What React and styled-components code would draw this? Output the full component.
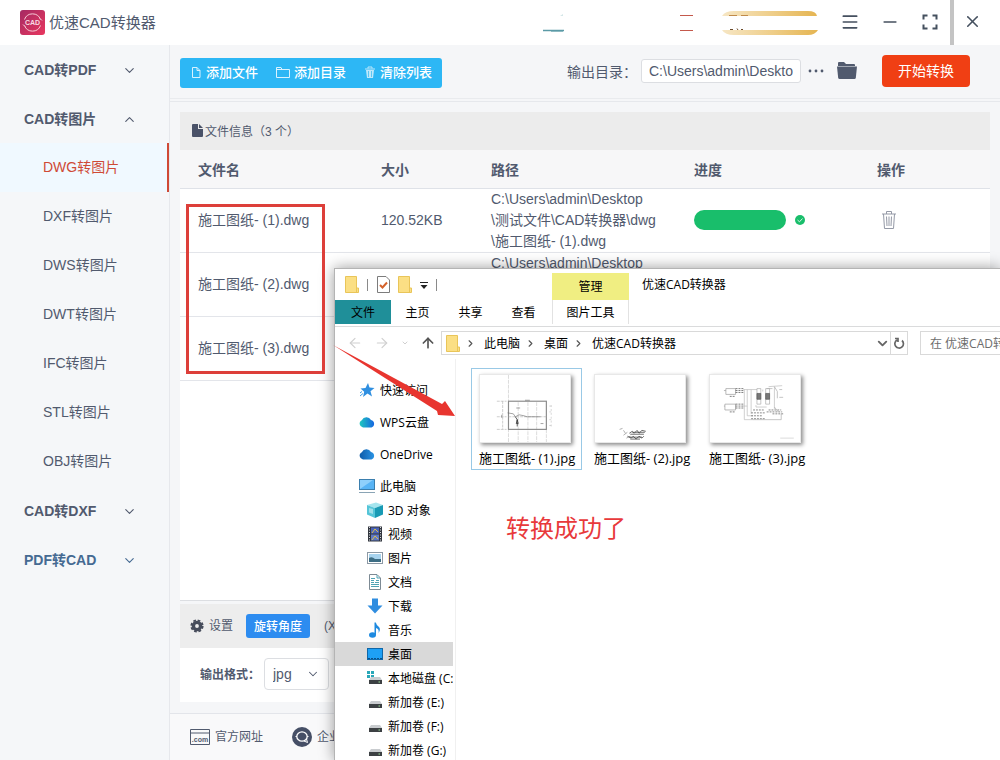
import React, { useState } from "react";
import styled, { createGlobalStyle, css } from "styled-components";
import {
  ArrowLeft,
  ArrowRight,
  ArrowUp,
  ChevronDown,
  ChevronRight,
  ChevronUp,
  Menu,
  Minus,
  X,
} from "lucide-react";

const appFont = `"Liberation Sans", "Noto Sans CJK SC", sans-serif`;
const shellFont = `"Open Sans", "Noto Sans CJK SC", sans-serif`;

const GlobalStyle = createGlobalStyle`
  * {
    box-sizing: border-box;
  }
  body {
    margin: 0;
    background: #f5f6f8;
    color: #515a6e;
    font-family: ${appFont};
    font-size: 14px;
  }
  button, input, select {
    margin: 0;
    font-family: inherit;
    color: inherit;
  }
  svg {
    display: block;
    flex: none;
  }
`;

const Page = styled.div`
  position: relative;
  display: flex;
  flex-direction: column;
  min-height: 100vh;
  overflow: hidden;
`;

/* ---------- title bar ---------- */

const TitleBar = styled.header`
  display: flex;
  align-items: center;
  height: 45px;
  padding-left: 20px;
  background: #fff;
`;

const AppTitle = styled.h1`
  flex: 1;
  margin: 0 0 0 4px;
  font-size: 15px;
  font-weight: 400;
  line-height: 24px;
`;

const TitleActions = styled.div`
  display: flex;
  align-items: center;
  height: 100%;
  padding-right: 10px;
`;

const WindowButton = styled.button`
  display: flex;
  align-items: center;
  justify-content: center;
  width: ${(p) => (p.$last ? 36 : 40)}px;
  height: 44px;
  padding: 0 0 2px;
  border: 0;
  background: none;
  color: #45505f;
`;

const TitleDivider = styled.span`
  width: 4px;
  height: 100%;
  background: #c4c4c4;
`;

/* ---------- body ---------- */

const Body = styled.div`
  display: flex;
  flex: 1;
`;

const Sidebar = styled.nav`
  flex: none;
  width: 170px;
  border-right: 1px solid #e6e8ec;
  background: #f5f7f9;
`;

const GroupButton = styled.button`
  display: flex;
  align-items: center;
  justify-content: space-between;
  width: 100%;
  height: 49px;
  padding: 0 32px 2px 24px;
  border: 0;
  background: none;
  font-size: 14px;
  font-weight: 700;
  color: ${(p) => (p.$accent ? "#456a92" : "#515a6e")};
  svg {
    margin-top: 3px;
  }
`;

const SubLink = styled.a`
  display: flex;
  align-items: center;
  height: 49px;
  padding: 0 0 3px 43px;
  color: #515a6e;
  text-decoration: none;
  ${(p) =>
    p.$active &&
    css`
      border-right: 2px solid #cf4a36;
      background: #f0f9ff;
      color: #cf4a36;
    `}
`;

const Main = styled.main`
  display: flex;
  flex: 1;
  flex-direction: column;
  min-width: 0;
`;

const Toolbar = styled.div`
  display: flex;
  align-items: center;
  height: 54px;
  padding: 0 30px 2px 10px;
  border-bottom: 1px solid #e9ebee;
`;

const ToolbarEdge = styled.div`
  height: 3px;
  border-bottom: 1px solid #e6e8ec;
`;

const ActionGroup = styled.div`
  display: flex;
  align-items: center;
  height: 30px;
  margin-right: auto;
  margin-top: 4px;
  padding: 0 10px 0 11px;
  gap: 18px;
  border-radius: 3px;
  background: #2db7f5;
`;

const ActionButton = styled.button`
  display: flex;
  align-items: center;
  gap: 4px;
  padding: 0;
  border: 0;
  background: none;
  color: #fff;
  font-size: 13px;
  font-weight: 500;
  line-height: 20px;
`;

const PathInput = styled.input`
  width: 160px;
  height: 24px;
  margin-left: 4px;
  padding: 0 7px;
  border: 1px solid #dcdee2;
  border-radius: 3px;
  background: #fff;
  font-size: 14px;
`;

const PlainButton = styled.button`
  display: flex;
  margin-left: ${(p) => p.$gap}px;
  padding: 0;
  border: 0;
  background: none;
`;

const StartButton = styled.button`
  width: 88px;
  height: 32px;
  margin-left: 25px;
  padding: 0 0 2px;
  border: 0;
  border-radius: 4px;
  background: #f03f14;
  color: #fff;
  font-size: 14px;
`;

const Panel = styled.section`
  display: flex;
  flex: 1;
  flex-direction: column;
  margin: 10px 10px 3px;
  border-bottom: 1px solid #dcdee2;
  background: #fff;
`;

const PanelHead = styled.div`
  display: flex;
  align-items: center;
  height: 38px;
  padding: 0 0 2px 12px;
  gap: 2px;
  background: #ececec;
  font-size: 12px;
`;

const FileTable = styled.table`
  width: 100%;
  border-collapse: collapse;
  table-layout: fixed;
  th {
    height: 38px;
    padding: 0 0 0 18px;
    border-bottom: 1px solid #dfe2e8;
    background: #f7f7f8;
    text-align: left;
    font-weight: 700;
  }
  td {
    height: 64px;
    padding: 0 0 0 18px;
    border-bottom: 1px solid #e3e5ea;
    line-height: 21px;
    white-space: nowrap;
  }
`;

const Col = styled.col`
  width: ${(p) => p.$w}px;
`;

const Progress = styled.div`
  display: flex;
  align-items: center;
  gap: 9px;
`;

const ProgressBar = styled.div`
  width: 92px;
  height: 20px;
  border-radius: 10px;
  background: #19be6b;
`;

const Settings = styled.section`
  margin: 0 10px 11px;
  background: #fff;
`;

const SettingsHead = styled.div`
  display: flex;
  align-items: center;
  height: 44px;
  padding-left: 10px;
  background: #ededed;
  font-size: 12px;
`;

const SettingsLabel = styled.span`
  margin: 0 13px 0 5px;
  padding-bottom: 3px;
`;

const RotateButton = styled.button`
  width: 64px;
  height: 24px;
  margin-right: 14px;
  padding: 0 0 2px;
  border: 0;
  border-radius: 3px;
  background: #2d8cf0;
  color: #fff;
  font-size: 12px;
  font-weight: 500;
`;

const FormatRow = styled.div`
  display: flex;
  align-items: center;
  height: 54px;
  padding: 0 0 2px 20px;
  label {
    width: 64px;
    padding-bottom: 2px;
    font-size: 12px;
    font-weight: 700;
  }
`;

const SelectBox = styled.div`
  display: grid;
  align-items: center;
  width: 65px;
  height: 32px;
  border: 1px solid #dcdee2;
  border-radius: 4px;
  select {
    grid-area: 1 / 1;
    height: 30px;
    padding: 0 8px;
    border: 0;
    background: none;
    font-size: 14px;
    appearance: none;
  }
  svg {
    grid-area: 1 / 1;
    justify-self: end;
    margin-right: 8px;
    pointer-events: none;
  }
`;

const Footer = styled.footer`
  display: flex;
  align-items: center;
  height: 47px;
  padding-left: 20px;
  gap: 29px;
  border-top: 1px solid #e3e5ea;
  background: #f9f9fa;
`;

const FooterLink = styled.a`
  display: flex;
  align-items: center;
  gap: 5px;
  color: #515a6e;
  font-size: 12px;
  text-decoration: none;
  span {
    padding-bottom: 3px;
  }
`;

/* ---------- explorer window ---------- */

const Explorer = styled.section`
  position: absolute;
  left: 334px;
  top: 268px;
  right: 0;
  bottom: 0;
  display: flex;
  flex-direction: column;
  overflow: hidden;
  border-top: 1px solid #b4b4b4;
  border-left: 1px solid #b4b4b4;
  background: #fff;
  color: #000;
  font-family: ${shellFont};
  font-size: 12px;
`;

const ExplorerShadow = styled.div`
  position: absolute;
  left: 334px;
  top: 268px;
  right: 0;
  bottom: 0;
  box-shadow: 0 0 14px rgba(0, 0, 0, 0.4);
`;

const Ribbon = styled.div`
  display: flex;
  height: 58px;
  border-bottom: 1px solid #dadbdc;
`;

const RibbonLeft = styled.div`
  width: 217px;
`;

const QuickBar = styled.div`
  display: flex;
  align-items: center;
  height: 31px;
  padding-left: 10px;
  gap: 8px;
`;

const QuickSep = styled.span`
  width: 1px;
  height: 12px;
  background: #8a8a8a;
`;

const TabRow = styled.div`
  display: flex;
`;

const Tab = styled.button`
  width: ${(p) => (p.$file ? 56 : 53)}px;
  height: 24px;
  padding: 0;
  border: 0;
  background: ${(p) => (p.$file ? "#1f8f99" : "none")};
  font-size: 12px;
`;

const ContextTab = styled.div`
  width: 77px;
  padding-top: 4px;
`;

const ContextHead = styled.div`
  height: 27px;
  background: #f0ee82;
  line-height: 27px;
  text-align: center;
`;

const ContextButton = styled.button`
  width: 100%;
  height: 24px;
  padding: 0;
  border: solid #e2e2e2;
  border-width: 0 1px;
  background: none;
  font-size: 12px;
`;

const ExplorerTitle = styled.h2`
  margin: 0 0 0 13px;
  font-size: 12px;
  font-weight: 400;
  line-height: 31px;
`;

const AddressRow = styled.div`
  display: flex;
  align-items: center;
  height: 32px;
  padding-left: 12px;
`;

const NavButtons = styled.div`
  display: flex;
  align-items: center;
  width: 94px;
  gap: 11px;
`;

const NavButton = styled.button`
  display: flex;
  padding: 0;
  border: 0;
  background: none;
  color: ${(p) => (p.$on ? "#555" : "#d0d0d0")};
`;

const AddressBox = styled.div`
  display: flex;
  flex: 1;
  align-items: center;
  height: 24px;
  padding-left: 4px;
  border: 1px solid #d9d9d9;
`;

const Crumb = styled.a`
  display: flex;
  align-items: center;
  gap: 8px;
  margin-left: 5px;
  color: #000;
  text-decoration: none;
`;

const AddressEnd = styled.div`
  display: flex;
  align-items: center;
  height: 100%;
  margin-left: auto;
`;

const RefreshButton = styled.button`
  display: flex;
  align-items: center;
  justify-content: center;
  width: 17px;
  height: 100%;
  padding: 0;
  border: 0;
  border-left: 1px solid #d9d9d9;
  background: none;
`;

const SearchInput = styled.input`
  width: 80px;
  height: 24px;
  margin-left: 12px;
  padding: 0 0 0 9px;
  border: 1px solid #d9d9d9;
  border-right: 0;
  border-radius: 0;
  font-size: 12px;
  &::placeholder {
    color: #6d6d6d;
    opacity: 1;
  }
`;

const ExplorerBody = styled.div`
  display: flex;
  flex: 1;
  min-height: 0;
`;

const Tree = styled.nav`
  flex: none;
  width: 121px;
  padding-top: 19px;
  padding-right: 2px;
  border-right: 1px solid #f0f0f0;
`;

const TreeLink = styled.a`
  display: flex;
  align-items: center;
  height: 24px;
  margin-bottom: ${(p) => (p.$spaced ? 8 : 0)}px;
  padding-left: ${(p) => (p.$child ? 32 : 24)}px;
  gap: 5px;
  overflow: hidden;
  background: ${(p) => (p.$selected ? "#d9d9d9" : "none")};
  color: #000;
  text-decoration: none;
  white-space: nowrap;
`;

const Files = styled.div`
  display: flex;
  align-items: flex-start;
  gap: 4px;
  padding: 9px 0 0 15px;
`;

const FileTile = styled.figure`
  width: 111px;
  height: 102px;
  margin: 0;
  padding: 5px 0 0 7px;
  border: 1px solid ${(p) => (p.$selected ? "#99c9e6" : "transparent")};
  figcaption {
    margin-top: 5px;
    font-size: 13px;
    line-height: 20px;
    white-space: nowrap;
  }
`;

const Thumb = styled.svg`
  width: 92px;
  height: 69px;
  border: 1px solid #e8e8e8;
  background: #fff;
  box-shadow: 2px 2px 4px rgba(0, 0, 0, 0.45);
`;

/* ---------- annotations drawn over the windows ---------- */

const MarkBox = styled.div`
  position: absolute;
  left: 186px;
  top: 204px;
  width: 139px;
  height: 170px;
  border: 3px solid #dd3f3a;
`;

const MarkArrow = styled.svg`
  position: absolute;
  left: 332px;
  top: 344px;
`;

const MarkText = styled.p`
  position: absolute;
  left: 506px;
  top: 510px;
  margin: 0;
  color: #e8393b;
  font-family: ${shellFont};
  font-size: 24px;
  line-height: 36px;
`;

/* ---------- icons ---------- */

const Logo = () => (
  <svg width="25" height="25" viewBox="0 0 25 25">
    <defs>
      <linearGradient id="logo" x1="0" y1="0" x2="1" y2="1">
        <stop offset="0" stopColor="#a52a63" />
        <stop offset="1" stopColor="#e8375f" />
      </linearGradient>
    </defs>
    <rect width="25" height="25" rx="3" fill="url(#logo)" />
    <path
      d="M4.500 9.500A8.500 8.500 0 0 1 20.500 9.500M20.500 15.500A8.500 8.500 0 0 1 4.500 15.500M3 14.500L5 16.500M22 10.500L20 8.500"
      fill="none"
      stroke="#f6cbd6"
    />
    <text
      x="12.500"
      y="15"
      textAnchor="middle"
      fontSize="7"
      fontWeight="700"
      fill="#f9dbe3"
      fontFamily="Liberation Sans"
    >
      CAD
    </text>
  </svg>
);

// half-hidden login / customer service / VIP badges
const HeaderBadges = () => (
  <svg width="287" height="26" viewBox="0 0 287 26">
    <defs>
      <linearGradient id="gold">
        <stop offset="0" stopColor="#f6e6c4" />
        <stop offset="0.5" stopColor="#efcf8c" />
        <stop offset="1" stopColor="#e5b552" />
      </linearGradient>
    </defs>
    <path d="M0 20.500H21" stroke="#5b9aa6" strokeWidth="1.500" />
    <path d="M8 21.500H20" stroke="#8dbac2" />
    <path d="M17 6L20 4V6Z" fill="#d3e6e7" />
    <path d="M137 5.500H150M137 20.500H150" stroke="#c4594c" />
    <path d="M179 6Q182 1 191 1H265Q273 1 274 6Z" fill="url(#gold)" />
    <path d="M179 20H275Q272 25 265 25H191Q182 25 179 20Z" fill="url(#gold)" />
    <path d="M186 5.500H194M198 5.500H205" stroke="#c08a4a" />
    <path d="M187 19.500H190M194 18.500L195 20M198 19.500H200" stroke="#6b4a2a" />
  </svg>
);

const FullscreenIcon = () => (
  <svg width="16" height="16" viewBox="0 0 16 16" fill="none" stroke="#45505f" strokeWidth="2">
    <path d="M1.500 5.500V1.500H5.500M10.500 1.500H14.500V5.500M14.500 10.500V14.500H10.500M5.500 14.500H1.500V10.500" />
  </svg>
);

const FileLineIcon = () => (
  <svg width="11" height="13" viewBox="0 0 11 13" fill="none" stroke="#d9f2ff">
    <path d="M1.500 1.500H6L9 4.500V11.500H1.500ZM6 1.500V4.500H9" />
  </svg>
);

const FolderLineIcon = () => (
  <svg width="14" height="12" viewBox="0 0 14 12" fill="none" stroke="#d9f2ff">
    <path d="M0.500 10.500V0.500H5L6 2.500H13.500V10.500ZM0.500 2.500H6" />
  </svg>
);

const TrashSmallIcon = () => (
  <svg width="12" height="13" viewBox="0 0 12 13">
    <path d="M1 3H11M4 2.500V1H8V2.500" fill="none" stroke="#bfe8fb" />
    <path d="M2 4H10L9 12H3Z" fill="#bfe8fb" />
    <path d="M4.500 5V11M7.500 5V11" stroke="#5cc6f3" />
  </svg>
);

const TrashIcon = () => (
  <svg width="14" height="20" viewBox="0 0 14 20" fill="none" stroke="#9499a6">
    <path d="M0 4H14M4.500 4V1.500H9.500V4M1.500 4L2.500 18.500H11.500L12.500 4M4.500 6.500L5 16M9.500 6.500L9 16M7 6.500V16" />
  </svg>
);

const DocSolidIcon = () => (
  <svg width="11" height="13" viewBox="0 0 11 13" fill="#4a5268">
    <path d="M1 0H6V5H11V12Q11 13 10 13H1Q0 13 0 12V1Q0 0 1 0ZM7 0L11 4H7Z" />
  </svg>
);

const DotsIcon = () => (
  <svg width="16" height="4" viewBox="0 0 16 4" fill="#515a6e">
    <circle cx="2" cy="2" r="1.400" />
    <circle cx="8" cy="2" r="1.400" />
    <circle cx="14" cy="2" r="1.400" />
  </svg>
);

const FolderSolidIcon = () => (
  <svg width="20" height="17" viewBox="0 0 20 17" fill="#515a6e">
    <path d="M1 4V1Q1 0 2 0H7L9 2H17Q18 2 18 3V4Z" />
    <path d="M0 4.500H20L18.800 16Q18.500 17 17.500 17H2.500Q1.500 17 1.200 16Z" />
  </svg>
);

const CheckIcon = () => (
  <svg width="10" height="10" viewBox="0 0 10 10">
    <circle cx="5" cy="5" r="5" fill="#19be6b" />
    <path d="M2.500 5L4.500 6.800L7.500 3.500" fill="none" stroke="#d6f5e4" />
  </svg>
);

const GearIcon = () => (
  <svg width="14" height="14" viewBox="0 0 14 14">
    <circle cx="7" cy="7" r="3.600" fill="none" stroke="#464c5b" strokeWidth="3.400" />
    <circle
      cx="7"
      cy="7"
      r="5.700"
      fill="none"
      stroke="#464c5b"
      strokeWidth="1.800"
      strokeDasharray="2.700 1.780"
    />
  </svg>
);

const SiteIcon = () => (
  <svg width="20" height="16" viewBox="0 0 20 16">
    <path d="M0.500 0.500H19.500V15.500H0.500ZM0.500 4H19.500" fill="none" stroke="#515a6e" />
    <text x="10" y="13" textAnchor="middle" fontSize="7" fontWeight="700" fill="#515a6e">
      .com
    </text>
  </svg>
);

const ServiceIcon = () => (
  <svg width="20" height="20" viewBox="0 0 20 20">
    <circle cx="10" cy="10" r="10" fill="#464f66" />
    <ellipse cx="10" cy="9.500" rx="5.200" ry="4.700" fill="none" stroke="#fff" strokeWidth="1.300" />
    <path d="M3.500 9.500H5M15 9.500H16.500M12 14L15.500 15.500L14.500 12" fill="none" stroke="#fff" />
  </svg>
);

const FolderIcon = () => (
  <svg width="14" height="17" viewBox="0 0 14 17">
    <path d="M0.500 0.500H11.500V12H13.500V16.500H0.500Z" fill="#fbdf84" stroke="#e9c559" />
    <path d="M11.500 10V16" stroke="#e9c559" />
  </svg>
);

const CheckDocIcon = () => (
  <svg width="14" height="17" viewBox="0 0 14 17" fill="none">
    <path d="M1.500 0.500H10L13.500 4V16.500H1.500Z" fill="#fff" stroke="#7c7c7c" />
    <path d="M4 9L6.500 11.500L11 6.500" stroke="#d4622b" strokeWidth="2" />
  </svg>
);

const CaretIcon = () => (
  <svg width="8" height="8" viewBox="0 0 8 8">
    <path d="M0 1.500H8" stroke="#222" />
    <path d="M0.500 4H7.500L4 8Z" fill="#222" />
  </svg>
);

const RefreshIcon = () => (
  <svg width="12" height="12" viewBox="0 0 12 12" fill="none" stroke="#666" strokeWidth="1.700">
    <path d="M9 3.500A4.300 4.300 0 1 1 4 3M2 1.500H5V5" />
  </svg>
);

const StarIcon = () => (
  <svg width="16" height="16" viewBox="0 0 16 16">
    <path
      d="M9 1L10.500 5.500L15.500 6L11.500 9.200L13 14.500L8.500 11.500L4 15L5.200 9.800L1.500 6.500L6.500 6Z"
      fill="#2f8fe0"
    />
    <path d="M1 14L4 11.500M1 11L3 9.500" stroke="#3a9be8" />
  </svg>
);

const CloudIcon = ({ from, to, id }) => (
  <svg width="16" height="16" viewBox="0 0 16 16">
    <defs>
      <linearGradient id={id}>
        <stop offset="0" stopColor={from} />
        <stop offset="1" stopColor={to} />
      </linearGradient>
    </defs>
    <path
      d="M4 13.500A3.800 3.800 0 0 1 2.800 6.300A5.200 5.200 0 0 1 12 6A3.900 3.900 0 0 1 12.500 13.500Z"
      fill={`url(#${id})`}
    />
  </svg>
);

const PcIcon = () => (
  <svg width="16" height="16" viewBox="0 0 16 16">
    <rect x="0.500" y="1.500" width="15" height="10" fill="#58b4f5" stroke="#3b7fae" />
    <path d="M1 11L14 2H1Z" fill="#8fd0fb" />
    <path d="M0 14.500H16" stroke="#8aa4b5" />
  </svg>
);

const CubeIcon = () => (
  <svg width="16" height="16" viewBox="0 0 16 16">
    <path d="M0 3L9 0.500L16 3L8 6Z" fill="#a5e5ee" />
    <path d="M0 3L8 6V16L0 12.500Z" fill="#55c5d8" />
    <path d="M8 6L16 3V12.500L8 16Z" fill="#189ab4" />
    <path d="M2 6L6 7V12L2 10.500Z" fill="#9fe0ea" />
  </svg>
);

const FilmIcon = () => (
  <svg width="16" height="16" viewBox="0 0 16 16">
    <rect x="1" y="0.500" width="14" height="15" fill="#33373f" />
    <path d="M2.500 1V15M13.500 1V15" stroke="#d6dae0" strokeDasharray="1 1.500" />
    <rect x="4" y="1.500" width="8" height="6" fill="#4a63b8" />
    <rect x="4" y="8.500" width="8" height="6" fill="#5f78c4" />
    <path d="M5 7L8 3L11 6M5 14L8 10L11 13" fill="none" stroke="#d9c04b" />
  </svg>
);

const PhotoIcon = () => (
  <svg width="16" height="16" viewBox="0 0 16 16">
    <rect x="0.500" y="2.500" width="15" height="11" fill="#fff" stroke="#8c99a5" />
    <rect x="2" y="4" width="12" height="8" fill="#a7d3ee" />
    <path d="M2 8Q5 6 8 9L14 9V12H2Z" fill="#3d6d84" />
  </svg>
);

const DocIcon = () => (
  <svg width="16" height="16" viewBox="0 0 16 16">
    <path d="M2.500 0.500H10L13.500 4V15.500H2.500Z" fill="#fff" stroke="#7d8a94" />
    <path
      d="M9 6.500H12M4 4.500H8M4 6.500H7M8 8.500H12M4 8.500H7M4 10.500H12M4 12.500H12M10 1V4H13"
      fill="none"
      stroke="#4fa3b5"
    />
  </svg>
);

const DownIcon = () => (
  <svg width="16" height="16" viewBox="0 0 16 16">
    <path d="M5 0.500H11V7.500H15.500L8 15.500L0.500 7.500H5Z" fill="#2f8de0" />
  </svg>
);

const MusicIcon = () => (
  <svg width="16" height="16" viewBox="0 0 16 16" fill="#1e8ae0">
    <ellipse cx="5.500" cy="13" rx="3.500" ry="2.700" />
    <path d="M7.500 13V0.500H8.800Q9.500 3.500 12 5Q14 7.500 11.500 11Q12.500 7 9 6V13Z" />
  </svg>
);

const DesktopIcon = () => (
  <svg width="16" height="16" viewBox="0 0 16 16">
    <rect x="0.500" y="2.500" width="15" height="11" fill="#1ea0f5" stroke="#0f67a8" />
    <path d="M1 12.500H15" stroke="#0b4f85" strokeDasharray="2 1" />
  </svg>
);

const DriveIcon = ({ system }) => (
  <svg width="16" height="16" viewBox="0 0 16 16">
    {system && (
      <path d="M0 1H3V4H0ZM4 1H7V4H4ZM0 5H3V8H0ZM4 5H7V8H4Z" fill="#29a7b8" />
    )}
    <path d="M4 7H13L15 10H2Z" fill="#c9cccf" />
    <rect x="2" y="10" width="13" height="4" fill="#3c4043" />
    <path d="M11.500 12H13" stroke="#9de29a" />
  </svg>
);

/* ---------- thumbnails ---------- */

const PlanDrawing = () => (
  <Thumb viewBox="0 0 92 69" fill="none" stroke="#777" strokeWidth="0.600">
    <path d="M29 0V69M39 28V69M49 28V69M58 28V69M68 56V69" stroke="#c4c4c4" strokeDasharray="4 1" />
    <rect x="29" y="27" width="39" height="29" stroke="#8a8a8a" strokeWidth="1.200" />
    <path d="M17 27H27M17 56H27M23 27V56M29 43H68M17 43H27" stroke="#aaa" strokeDasharray="3 1" />
    <path d="M73 31V54M71 32H75M71 38H75M71 46H75M71 52H75" stroke="#bbb" strokeDasharray="2 2" />
    <path d="M46 26H51M37 34H41M28 39L34 40L36 43L40 41L45 42L48 43L62 43M62 50H65M22 41V44" stroke="#666" />
    <path d="M36 43L38 46V53M38 46L37 50H39Z" stroke="#333" strokeWidth="0.800" />
  </Thumb>
);

const SketchDrawing = () => (
  <Thumb viewBox="0 0 92 69" fill="none" stroke="#444" strokeWidth="0.800">
    <path d="M25 56L28 55M29 62L33 59M29 57L31 60M32 65L36 63" stroke="#999" />
    <path d="M35 60L38 58L40 60L43 57L45 60L48 57L52 58M36 61H50M38 59H51" />
    <path d="M33 63L37 65L39 63L42 66L45 63L48 65L50 63M35 64H48M36 66H46" />
  </Thumb>
);

const CircuitDrawing = () => (
  <Thumb viewBox="0 0 92 69" fill="none" stroke="#777" strokeWidth="0.700">
    <path d="M16 14H26V20H16ZM15 30H26V36H15ZM14 16H16M14 32H15" stroke="#999" />
    <path d="M26 14H34M26 16H34M26 18H34M26 30H34M26 32H34M26 34H34M20 22H25M20 38H25" stroke="#444" strokeDasharray="2 1" />
    <path d="M35 15V46H44M38 15V42H44M42 15V40M34 15H48M34 32H38M54 17V15M47 31V33H58M66 12V35M60 12L74 11" stroke="#bbb" />
    <path d="M48 14H52V30H48ZM57 14H61V30H57Z" stroke="#aaa" />
    <path d="M48 19H52V25H48ZM57 19H61V25H57Z" fill="#777" stroke="#555" />
    <path d="M44 36H56M42 39H56M42 42H54M42 45H56M58 38H74M60 36H73M64 40H76" stroke="#555" strokeDasharray="2 1" />
    <path d="M58 14H64M66 12L69 17V24M71 15H74M71 23H75M66 33L70 38M44 46H73V40" stroke="#aaa" />
    <path d="M72 65H86" stroke="#ccc" />
  </Thumb>
);

const imageFormats = [
  "DWG转图片",
  "DXF转图片",
  "DWS转图片",
  "DWT转图片",
  "IFC转图片",
  "STL转图片",
  "OBJ转图片",
];

const groups = [
  { name: "CAD转PDF" },
  { name: "CAD转图片", items: imageFormats },
  { name: "CAD转DXF" },
  { name: "PDF转CAD", accent: true },
];

const files = [1, 2, 3].map((n) => ({
  name: `施工图纸- (${n}).dwg`,
  size: "120.52KB",
}));

const tree = [
  { name: "快速访问", icon: <StarIcon />, spaced: true },
  {
    name: "WPS云盘",
    icon: <CloudIcon id="wps" from="#1fc8c0" to="#1666e0" />,
    spaced: true,
  },
  {
    name: "OneDrive",
    icon: <CloudIcon id="onedrive" from="#0f5ba8" to="#2a93e4" />,
    spaced: true,
  },
  { name: "此电脑", icon: <PcIcon /> },
  { name: "3D 对象", icon: <CubeIcon />, child: true },
  { name: "视频", icon: <FilmIcon />, child: true },
  { name: "图片", icon: <PhotoIcon />, child: true },
  { name: "文档", icon: <DocIcon />, child: true },
  { name: "下载", icon: <DownIcon />, child: true },
  { name: "音乐", icon: <MusicIcon />, child: true },
  { name: "桌面", icon: <DesktopIcon />, child: true, selected: true },
  { name: "本地磁盘 (C:)", icon: <DriveIcon system />, child: true },
  { name: "新加卷 (E:)", icon: <DriveIcon />, child: true },
  { name: "新加卷 (F:)", icon: <DriveIcon />, child: true },
  { name: "新加卷 (G:)", icon: <DriveIcon />, child: true },
];

const ConverterSidebar = () => {
  const [opened, setOpened] = useState("CAD转图片");
  const [active, setActive] = useState("DWG转图片");

  return (
    <Sidebar>
      {groups.map((group) => {
        const isOpen = opened === group.name;
        return (
          <React.Fragment key={group.name}>
            <GroupButton
              type="button"
              $accent={group.accent}
              onClick={() => setOpened(isOpen ? "" : group.name)}
            >
              {group.name}
              {isOpen ? (
                <ChevronUp size={15} strokeWidth={1.8} />
              ) : (
                <ChevronDown size={15} strokeWidth={1.8} />
              )}
            </GroupButton>
            {isOpen &&
              (group.items || []).map((item) => (
                <SubLink
                  key={item}
                  href="#"
                  $active={item === active}
                  onClick={() => setActive(item)}
                >
                  {item}
                </SubLink>
              ))}
          </React.Fragment>
        );
      })}
    </Sidebar>
  );
};

const ExplorerWindow = () => (
  <>
    <ExplorerShadow />
    <Explorer>
      <Ribbon>
        <RibbonLeft>
          <QuickBar>
            <FolderIcon />
            <QuickSep />
            <CheckDocIcon />
            <FolderIcon />
            <CaretIcon />
            <QuickSep />
          </QuickBar>
          <TabRow>
            <Tab type="button" $file>
              文件
            </Tab>
            <Tab type="button">主页</Tab>
            <Tab type="button">共享</Tab>
            <Tab type="button">查看</Tab>
          </TabRow>
        </RibbonLeft>
        <ContextTab>
          <ContextHead>管理</ContextHead>
          <ContextButton type="button">图片工具</ContextButton>
        </ContextTab>
        <ExplorerTitle>优速CAD转换器</ExplorerTitle>
      </Ribbon>

      <AddressRow>
        <NavButtons>
          <NavButton type="button" title="后退">
            <ArrowLeft size={16} strokeWidth={1.8} />
          </NavButton>
          <NavButton type="button" title="前进">
            <ArrowRight size={16} strokeWidth={1.8} />
          </NavButton>
          <NavButton type="button" title="历史">
            <ChevronDown size={8} strokeWidth={3} />
          </NavButton>
          <NavButton type="button" title="向上" $on>
            <ArrowUp size={16} strokeWidth={2.5} />
          </NavButton>
        </NavButtons>
        <AddressBox>
          <FolderIcon />
          {["此电脑", "桌面", "优速CAD转换器"].map((crumb) => (
            <Crumb key={crumb} href="#">
              <ChevronRight size={11} strokeWidth={2.5} color="#555" />
              {crumb}
            </Crumb>
          ))}
          <AddressEnd>
            <ChevronDown size={15} strokeWidth={3} color="#666" />
            <RefreshButton type="button" title="刷新">
              <RefreshIcon />
            </RefreshButton>
          </AddressEnd>
        </AddressBox>
        <SearchInput aria-label="搜索" placeholder="在 优速CAD转换器 中搜索" />
      </AddressRow>

      <ExplorerBody>
        <Tree>
          {tree.map((node) => (
            <TreeLink
              key={node.name}
              href="#"
              $child={node.child}
              $spaced={node.spaced}
              $selected={node.selected}
            >
              {node.icon}
              {node.name}
            </TreeLink>
          ))}
        </Tree>
        <Files>
          <FileTile $selected>
            <PlanDrawing />
            <figcaption>施工图纸- (1).jpg</figcaption>
          </FileTile>
          <FileTile>
            <SketchDrawing />
            <figcaption>施工图纸- (2).jpg</figcaption>
          </FileTile>
          <FileTile>
            <CircuitDrawing />
            <figcaption>施工图纸- (3).jpg</figcaption>
          </FileTile>
        </Files>
      </ExplorerBody>
    </Explorer>
  </>
);

const App = () => {
  const [format, setFormat] = useState("jpg");

  return (
    <Page>
      <GlobalStyle />
      <TitleBar>
        <Logo />
        <AppTitle>优速CAD转换器</AppTitle>
        <TitleActions>
          <HeaderBadges />
          <WindowButton type="button" title="菜单">
            <Menu size={20} strokeWidth={2} />
          </WindowButton>
          <WindowButton type="button" title="最小化">
            <Minus size={20} strokeWidth={2} />
          </WindowButton>
          <WindowButton type="button" title="最大化">
            <FullscreenIcon />
          </WindowButton>
          <TitleDivider />
          <WindowButton type="button" title="关闭" $last>
            <X size={19} strokeWidth={2} />
          </WindowButton>
        </TitleActions>
      </TitleBar>

      <Body>
        <ConverterSidebar />
        <Main>
          <Toolbar>
            <ActionGroup>
              <ActionButton type="button">
                <FileLineIcon />
                添加文件
              </ActionButton>
              <ActionButton type="button">
                <FolderLineIcon />
                添加目录
              </ActionButton>
              <ActionButton type="button">
                <TrashSmallIcon />
                清除列表
              </ActionButton>
            </ActionGroup>
            <label htmlFor="output">输出目录：</label>
            <PathInput id="output" defaultValue="C:\Users\admin\Desktop" />
            <PlainButton type="button" title="更多" $gap={7}>
              <DotsIcon />
            </PlainButton>
            <PlainButton type="button" title="打开目录" $gap={13}>
              <FolderSolidIcon />
            </PlainButton>
            <StartButton type="button">开始转换</StartButton>
          </Toolbar>
          <ToolbarEdge />

          <Panel>
            <PanelHead>
              <DocSolidIcon />
              文件信息（3 个）
            </PanelHead>
            <FileTable>
              <colgroup>
                <Col $w={183} />
                <Col $w={110} />
                <Col $w={203} />
                <Col $w={183} />
                <col />
              </colgroup>
              <thead>
                <tr>
                  <th>文件名</th>
                  <th>大小</th>
                  <th>路径</th>
                  <th>进度</th>
                  <th>操作</th>
                </tr>
              </thead>
              <tbody>
                {files.map((file) => (
                  <tr key={file.name}>
                    <td>{file.name}</td>
                    <td>{file.size}</td>
                    <td>
                      C:\Users\admin\Desktop
                      <br />
                      \测试文件\CAD转换器\dwg
                      <br />\{file.name}
                    </td>
                    <td>
                      <Progress>
                        <ProgressBar />
                        <CheckIcon />
                      </Progress>
                    </td>
                    <td>
                      <PlainButton type="button" title="删除" $gap={5}>
                        <TrashIcon />
                      </PlainButton>
                    </td>
                  </tr>
                ))}
              </tbody>
            </FileTable>
          </Panel>

          <Settings>
            <SettingsHead>
              <GearIcon />
              <SettingsLabel>设置</SettingsLabel>
              <RotateButton type="button">旋转角度</RotateButton>
              (X)
            </SettingsHead>
            <FormatRow>
              <label htmlFor="format">输出格式：</label>
              <SelectBox>
                <select
                  id="format"
                  value={format}
                  onChange={(e) => setFormat(e.target.value)}
                >
                  <option>jpg</option>
                  <option>png</option>
                  <option>bmp</option>
                </select>
                <ChevronDown size={14} strokeWidth={1.8} />
              </SelectBox>
            </FormatRow>
          </Settings>

          <Footer>
            <FooterLink href="#">
              <SiteIcon />
              <span>官方网址</span>
            </FooterLink>
            <FooterLink href="#">
              <ServiceIcon />
              <span>企业客服</span>
            </FooterLink>
          </Footer>
        </Main>
      </Body>

      <ExplorerWindow />

      <MarkBox />
      <MarkArrow width="124" height="76" viewBox="0 0 124 76">
        <path d="M1 1L110 60L113 57L123 72L106 71L105 67Z" fill="#e8352f" />
      </MarkArrow>
      <MarkText>转换成功了</MarkText>
    </Page>
  );
};

export default App;
